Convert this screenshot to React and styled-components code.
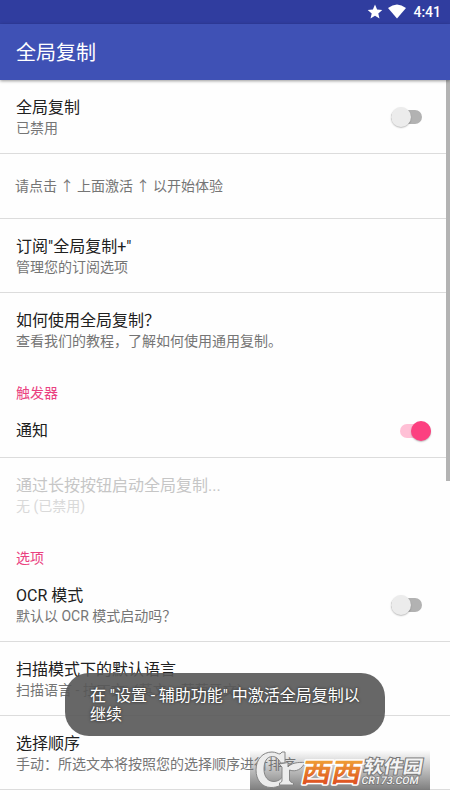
import React from "react";
import styled, { createGlobalStyle, css } from "styled-components";

const Global = createGlobalStyle`
  * { box-sizing: border-box; }
  body { margin: 0; background: #fff; overflow: hidden; }
`;

const Screen = styled.div`
  position: relative;
  width: 450px;
  height: 800px;
  overflow: hidden;
  display: flex;
  flex-direction: column;
  background: #fefefe;
  font-family: Roboto, "Noto Sans CJK SC", sans-serif;
  color: #212121;
`;

const StatusBar = styled.div`
  flex: none;
  height: 24px;
  display: flex;
  align-items: center;
  justify-content: flex-end;
  padding-right: 9px;
  background: #303d9f;
  color: #fff;
  font-size: 14px;
  font-weight: 500;
  line-height: 24px;
`;

const StatusIcon = styled.svg`
  display: block;
  flex: none;
  margin-right: ${(p) => p.$gap}px;
  fill: #fff;
`;

const AppBar = styled.header`
  flex: none;
  position: relative;
  z-index: 1;
  height: 56px;
  display: flex;
  align-items: center;
  padding: 1px 16px 0;
  background: #3f51b5;
  box-shadow: 0 1px 3px rgba(0, 0, 0, 0.4);
  color: #fff;
  font-size: 20px;
  line-height: 28px;
`;

const Content = styled.main`
  flex: 1;
  position: relative;
`;

const Row = styled.section`
  display: flex;
  align-items: center;
  justify-content: space-between;
  padding: 17px 19px 15px 16px;
  border-bottom: 1px solid ${(p) => (p.$plain ? "transparent" : "#dcdcdc")};
`;

const Labels = styled.div`
  white-space: nowrap;
`;

const Title = styled.div`
  font-size: 16px;
  line-height: 22px;
  color: ${(p) => (p.$disabled ? "#c6c6c6" : "#202020")};
`;

const Summary = styled.div`
  margin-top: -1px;
  font-size: 14px;
  line-height: 20px;
  color: ${(p) => (p.$disabled ? "#d9d9d9" : "#757575")};
`;

const Hint = styled.div`
  height: 65px;
  display: flex;
  align-items: center;
  padding: 0 0 2px 15px;
  border-bottom: 1px solid #dcdcdc;
  font-size: 14px;
  word-spacing: -0.5px;
  color: #757575;
  white-space: pre;
`;

const Category = styled.h2`
  margin: 0;
  padding: 16px 16px 0;
  font-size: 14px;
  font-weight: 400;
  line-height: 20px;
  color: #ea4180;
`;

const Track = styled.div`
  width: 31px;
  height: 14px;
  flex: none;
  display: flex;
  align-items: center;
  border-radius: 7px;
  background: #b2b2b2;
  margin: -1px 9px 0 0;
  ${(p) =>
    p.$on &&
    css`
      justify-content: flex-end;
      background: #ffc0d6;
      margin-right: 0;
    `}
`;

const Thumb = styled.div`
  width: 20px;
  height: 20px;
  flex: none;
  border-radius: 50%;
  background: ${(p) => (p.$on ? "#fc4080" : "#ececec")};
  box-shadow: 0 1px 1.5px rgba(0, 0, 0, 0.25);
`;

const ScrollThumb = styled.div`
  position: absolute;
  top: 0;
  right: 0;
  width: 4px;
  height: 401px;
  background: #b3b3b3;
`;

const Toast = styled.div`
  position: absolute;
  left: 65px;
  top: 673px;
  width: 320px;
  height: 63px;
  padding: 13px 24px 0 25px;
  border-radius: 24px;
  background: rgba(88, 88, 88, 0.91);
  color: #fff;
  font-size: 16px;
  line-height: 19px;
  word-spacing: -0.2px;
  text-shadow: 0 0 3px rgba(0, 0, 0, 0.73);
  white-space: nowrap;
`;

const Watermark = styled.svg`
  position: absolute;
  left: 250px;
  top: 750px;
`;

function Switch({ on }) {
  return (
    <Track $on={on}>
      <Thumb $on={on} />
    </Track>
  );
}

function Preference({ title, summary, disabled, plain, children }) {
  return (
    <Row $plain={plain}>
      <Labels>
        <Title $disabled={disabled}>{title}</Title>
        {summary && <Summary $disabled={disabled}>{summary}</Summary>}
      </Labels>
      {children}
    </Row>
  );
}

function SiteMark() {
  return (
    <Watermark width="180" height="40" viewBox="0 0 180 40">
      <defs>
        <linearGradient id="shade" x1="0" y1="0" x2="0" y2="1">
          <stop offset="0" stopColor="#777" stopOpacity="0" />
          <stop offset="1" stopColor="#777" stopOpacity="0.95" />
        </linearGradient>
        <linearGradient id="flame" x1="0" y1="0" x2="0" y2="1">
          <stop offset="0.1" stopColor="#f4b43a" />
          <stop offset="0.9" stopColor="#dc4a20" />
        </linearGradient>
      </defs>
      <rect width="180" height="40" fill="url(#shade)" />
      <g fill="#ececec" stroke="#858585" strokeWidth="1" strokeLinejoin="round">
        <path d="M35 2V13H30.5C29 9 26 6.5 22.5 6.5C16.5 6.5 14 12 14 19C14 27 18 31.5 24 31.5C28 31.5 31 29 33 26.5L36 29C33 35 28 37.5 21 37.5C12 37.5 6 30 6 20C6 9 13 2 22 2C26 2 28 4 30 4L32 2Z" />
        <path d="M29 14L38 12.5V17C41 13 48 12 55 12.5C52 19 46 22.5 39.5 20V30C40 32 41.5 32.5 43.5 33V35H29.5V33C31.5 32.5 32 31.5 32 30V17Z" />
      </g>
      <g
        transform="translate(50 31.5) skewX(-12) scale(1 0.96)"
        fontFamily="'Noto Sans CJK SC', sans-serif"
        fontWeight="700"
        fontSize="28"
        stroke="#fff"
        strokeWidth="3"
        strokeLinejoin="round"
        paintOrder="stroke"
        fill="url(#flame)"
      >
        <text x="0" y="0" textLength="60" lengthAdjust="spacingAndGlyphs">西西</text>
      </g>
      <g
        transform="translate(113 22.5) skewX(-10)"
        fontFamily="'Noto Sans CJK SC', sans-serif"
        fontWeight="700"
        fontSize="18"
        stroke="#777"
        strokeWidth="2"
        paintOrder="stroke"
        fill="#f4f4f4"
      >
        <text x="0" y="0" textLength="59" lengthAdjust="spacingAndGlyphs">软件园</text>
      </g>
      <g
        transform="translate(111 33.5) skewX(-10)"
        fontFamily="Roboto, sans-serif"
        fontWeight="500"
        fontSize="10.5"
        stroke="#777"
        strokeWidth="1.5"
        paintOrder="stroke"
        fill="#f4f4f4"
      >
        <text x="0" y="0" textLength="57" lengthAdjust="spacingAndGlyphs">CR173.COM</text>
      </g>
    </Watermark>
  );
}

export default function App() {
  return (
    <Screen>
      <Global />
      <StatusBar>
        <StatusIcon $gap={5} width="16" height="16" viewBox="0 0 16 16">
          <path d="M8 .4l2.1 5 5.2.5-4 3.5 1.2 5.2L8 11.8 3.5 14.6l1.2-5.2-4-3.5 5.2-.5z" />
        </StatusIcon>
        <StatusIcon $gap={7} width="18" height="16" viewBox="0 0 18 16">
          <path d="M0 4Q9-3.2 18 4L9 14.5z" />
        </StatusIcon>
        4:41
      </StatusBar>
      <AppBar>全局复制</AppBar>
      <Content>
        <Preference title="全局复制" summary="已禁用">
          <Switch />
        </Preference>
        <Hint>请点击 ↑ 上面激活 ↑ 以开始体验</Hint>
        <Preference title={'订阅"全局复制+"'} summary="管理您的订阅选项" />
        <Preference plain title="如何使用全局复制？" summary="查看我们的教程，了解如何使用通用复制。" />
        <Category>触发器</Category>
        <Preference title="通知">
          <Switch on />
        </Preference>
        <Preference plain disabled title="通过长按按钮启动全局复制..." summary="无 (已禁用)" />
        <Category>选项</Category>
        <Preference title="OCR 模式" summary="默认以 OCR 模式启动吗？">
          <Switch />
        </Preference>
        <Preference title="扫描模式下的默认语言" summary="扫描语言 - 拉丁文（英文，葡萄牙文）" />
        <Preference title="选择顺序" summary="手动：所选文本将按照您的选择顺序进行排序" />
        <ScrollThumb />
      </Content>
      <Toast>
        在 "设置 - 辅助功能" 中激活全局复制以
        <br />
        继续
      </Toast>
      <SiteMark />
    </Screen>
  );
}
